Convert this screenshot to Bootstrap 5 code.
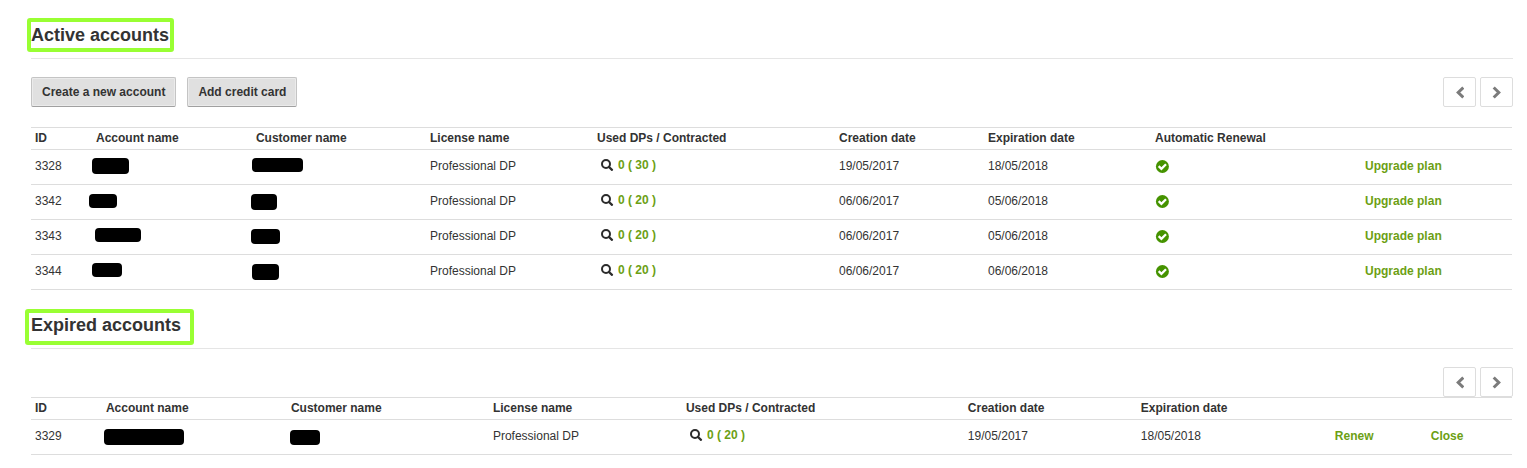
<!DOCTYPE html>
<html lang="en">
<head>
<meta charset="utf-8">
<meta name="viewport" content="width=device-width, initial-scale=1">
<title>Accounts</title>
<link href="https://cdn.jsdelivr.net/npm/bootstrap@5.3.0/dist/css/bootstrap.min.css" rel="stylesheet">
<style>
  body { font-family: "Liberation Sans", Arial, sans-serif; font-size: 12px; line-height: 18px; color: #333; background: #fff; }
  .page { padding: 0 14px 12px 31px; }
  .section-head { padding: 23px 0 11px; border-bottom: 1px solid #e5e5e5; }
  .section-title { font-size: 18px; line-height: 24px; font-weight: 700; }
  .marker { position: absolute; border: 4px solid #9f3; border-radius: 3px; pointer-events: none; }
  .marker-active { inset: -5px -5px -5px -4px; }
  .marker-expired { inset: -4px -13px -8px -6px; }
  .toolbar { padding-top: 18px; min-height: 48px; }
  .toolbar-spaced { margin-bottom: 20px; }
  .btn-action { font-size: 12px; line-height: 18px; font-weight: 700; color: #333; padding: 5px 10px; border: 1px solid #c4c4c4; border-bottom-color: #a0a0a0; border-radius: 2px; background: #e0e0e0; box-shadow: inset 0 0 0 1px #ebebeb; }
  .btn-action:hover { background: #d6d6d6; }
  .btn-page { width: 33px; height: 30px; padding: 0; border: 1px solid #ddd; border-radius: 2px; background: #fff; }
  .pager { gap: 4px; }
  .actions { gap: 11px; }
  .table-wrap { padding-right: 1px; }
  .grid-table { table-layout: fixed; border-collapse: separate; border-spacing: 0; border-bottom: 1px solid #ddd; color: #333; --bs-table-color: #333; }
  .grid-table > thead > tr > th, .grid-table > tbody > tr > td { border: 0; border-top: 1px solid #ddd; padding: 0 4px; white-space: nowrap; }
  .grid-table > thead > tr > th { height: 22px; padding-top: 1px; padding-bottom: 2px; vertical-align: top; }
  .grid-table > tbody > tr > td { height: 35px; padding-top: 7px; vertical-align: top; }
  .grid-table > tbody > tr > td.used { padding: 6px 4px 0 8px; }
  .used svg { margin-right: 4px; vertical-align: -3px; }
  .bar-cell { position: relative; }
  .redaction { position: absolute; left: 0; top: 0; width: 100%; height: 34px; overflow: visible; fill: #000; }
  .check { vertical-align: -3px; }
  .green { color: #6c9f14; font-weight: 700; text-decoration: none; }
  .green:hover { text-decoration: underline; }
</style>
</head>
<body>
<svg class="d-none" aria-hidden="true">
  <symbol id="lens" viewBox="0 0 13 13"><circle cx="5" cy="5" r="4" fill="none" stroke="#2b2b2b" stroke-width="2"/><path d="M8 8 11 10.8" stroke="#2b2b2b" stroke-width="2.3" stroke-linecap="round"/></symbol>
  <symbol id="tick" viewBox="0 0 14 13"><circle cx="7.4" cy="6.5" r="6.5" fill="#459300"/><path d="M3.7 6.2 6.4 8.8 11 4.2" fill="none" stroke="#fff" stroke-width="2.3"/></symbol>
  <symbol id="prev" viewBox="0 0 9 13"><path d="M8.3 1.5 3.2 6.5 8.3 11.5" fill="none" stroke="#7b7b7b" stroke-width="3"/></symbol>
  <symbol id="next" viewBox="0 0 9 13"><path d="M1.7 1.5 6.8 6.5 1.7 11.5" fill="none" stroke="#7b7b7b" stroke-width="3"/></symbol>
</svg>
<main class="page">
  <section>
    <div class="section-head d-flex">
      <h2 class="section-title position-relative m-0">Active accounts<span class="marker marker-active"></span></h2>
    </div>
    <div class="toolbar toolbar-spaced d-flex justify-content-between align-items-start">
      <div class="actions d-flex">
        <button type="button" class="btn btn-action">Create a new account</button>
        <button type="button" class="btn btn-action">Add credit card</button>
      </div>
      <div class="pager d-flex">
        <button type="button" class="btn btn-page d-flex align-items-center justify-content-center" aria-label="Previous page"><svg width="9" height="13"><use href="#prev"/></svg></button>
        <button type="button" class="btn btn-page d-flex align-items-center justify-content-center" aria-label="Next page"><svg width="9" height="13"><use href="#next"/></svg></button>
      </div>
    </div>
    <div class="table-wrap">
      <table class="table grid-table mb-0">
        <colgroup>
          <col style="width:4.12%"><col style="width:10.8%"><col style="width:11.75%"><col style="width:11.28%"><col style="width:16.34%"><col style="width:10.06%"><col style="width:11.28%"><col style="width:14.18%"><col style="width:10.19%">
        </colgroup>
        <thead>
          <tr><th>ID</th><th>Account name</th><th>Customer name</th><th>License name</th><th>Used DPs / Contracted</th><th>Creation date</th><th>Expiration date</th><th>Automatic Renewal</th><th></th></tr>
        </thead>
        <tbody>
          <tr>
            <td>3328</td>
            <td class="bar-cell"><svg class="redaction"><rect x="0" y="8" width="37" height="16" rx="4"/></svg></td>
            <td class="bar-cell"><svg class="redaction"><rect x="0" y="8" width="51" height="14" rx="4"/></svg></td>
            <td>Professional DP</td>
            <td class="used"><svg width="13" height="13"><use href="#lens"/></svg><a href="#" class="green">0 ( 30 )</a></td>
            <td>19/05/2017</td><td>18/05/2018</td>
            <td><svg class="check" width="14" height="13" role="img" aria-label="Enabled"><use href="#tick"/></svg></td>
            <td><a href="#" class="green">Upgrade plan</a></td>
          </tr>
          <tr>
            <td>3342</td>
            <td class="bar-cell"><svg class="redaction"><rect x="-3" y="9" width="28" height="14" rx="4"/></svg></td>
            <td class="bar-cell"><svg class="redaction"><rect x="-1" y="9" width="26" height="16" rx="4"/></svg></td>
            <td>Professional DP</td>
            <td class="used"><svg width="13" height="13"><use href="#lens"/></svg><a href="#" class="green">0 ( 20 )</a></td>
            <td>06/06/2017</td><td>05/06/2018</td>
            <td><svg class="check" width="14" height="13" role="img" aria-label="Enabled"><use href="#tick"/></svg></td>
            <td><a href="#" class="green">Upgrade plan</a></td>
          </tr>
          <tr>
            <td>3343</td>
            <td class="bar-cell"><svg class="redaction"><rect x="3" y="8" width="46" height="14" rx="4"/></svg></td>
            <td class="bar-cell"><svg class="redaction"><rect x="-1" y="9" width="29" height="15" rx="4"/></svg></td>
            <td>Professional DP</td>
            <td class="used"><svg width="13" height="13"><use href="#lens"/></svg><a href="#" class="green">0 ( 20 )</a></td>
            <td>06/06/2017</td><td>05/06/2018</td>
            <td><svg class="check" width="14" height="13" role="img" aria-label="Enabled"><use href="#tick"/></svg></td>
            <td><a href="#" class="green">Upgrade plan</a></td>
          </tr>
          <tr>
            <td>3344</td>
            <td class="bar-cell"><svg class="redaction"><rect x="0" y="8" width="30" height="14" rx="4"/></svg></td>
            <td class="bar-cell"><svg class="redaction"><rect x="0" y="9" width="27" height="16" rx="4"/></svg></td>
            <td>Professional DP</td>
            <td class="used"><svg width="13" height="13"><use href="#lens"/></svg><a href="#" class="green">0 ( 20 )</a></td>
            <td>06/06/2017</td><td>06/06/2018</td>
            <td><svg class="check" width="14" height="13" role="img" aria-label="Enabled"><use href="#tick"/></svg></td>
            <td><a href="#" class="green">Upgrade plan</a></td>
          </tr>
        </tbody>
      </table>
    </div>
  </section>

  <section>
    <div class="section-head d-flex">
      <h2 class="section-title position-relative m-0">Expired accounts<span class="marker marker-expired"></span></h2>
    </div>
    <div class="toolbar d-flex justify-content-end align-items-start">
      <div class="pager d-flex">
        <button type="button" class="btn btn-page d-flex align-items-center justify-content-center" aria-label="Previous page"><svg width="9" height="13"><use href="#prev"/></svg></button>
        <button type="button" class="btn btn-page d-flex align-items-center justify-content-center" aria-label="Next page"><svg width="9" height="13"><use href="#next"/></svg></button>
      </div>
    </div>
    <div class="table-wrap">
      <table class="table grid-table mb-0">
        <colgroup>
          <col style="width:4.79%"><col style="width:12.49%"><col style="width:13.64%"><col style="width:13.03%"><col style="width:19.04%"><col style="width:11.68%"><col style="width:13.1%"><col style="width:6.48%"><col style="width:5.75%">
        </colgroup>
        <thead>
          <tr><th>ID</th><th>Account name</th><th>Customer name</th><th>License name</th><th>Used DPs / Contracted</th><th>Creation date</th><th>Expiration date</th><th></th><th></th></tr>
        </thead>
        <tbody>
          <tr>
            <td>3329</td>
            <td class="bar-cell"><svg class="redaction"><rect x="2" y="9" width="80" height="16" rx="4"/></svg></td>
            <td class="bar-cell"><svg class="redaction"><rect x="3" y="10" width="30" height="15" rx="4"/></svg></td>
            <td>Professional DP</td>
            <td class="used"><svg width="13" height="13"><use href="#lens"/></svg><a href="#" class="green">0 ( 20 )</a></td>
            <td>19/05/2017</td><td>18/05/2018</td>
            <td><a href="#" class="green">Renew</a></td>
            <td><a href="#" class="green">Close</a></td>
          </tr>
        </tbody>
      </table>
    </div>
  </section>
</main>
<script src="https://cdn.jsdelivr.net/npm/bootstrap@5.3.0/dist/js/bootstrap.bundle.min.js"></script>
</body>
</html>
